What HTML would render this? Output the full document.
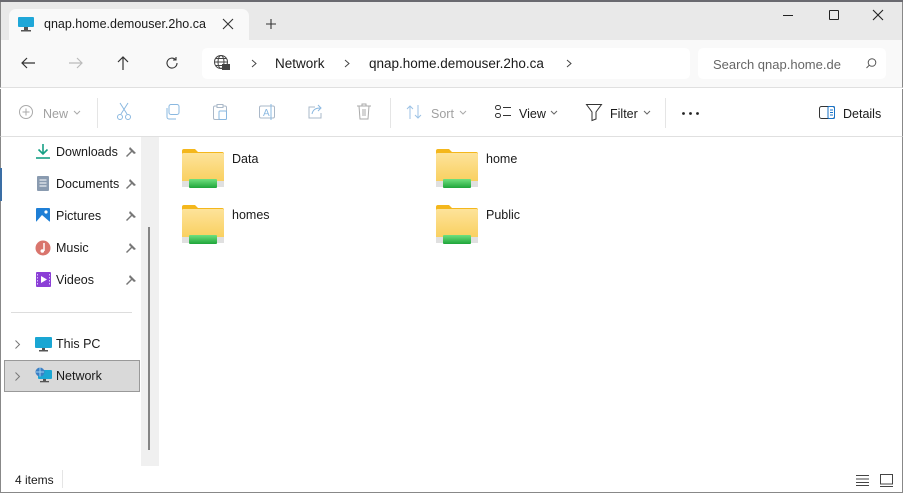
<!DOCTYPE html><html><head><style>
*{box-sizing:border-box;margin:0;padding:0}
body{width:903px;height:493px;overflow:hidden;font-family:"Segoe UI","Liberation Sans",sans-serif;font-size:12.5px;color:#1a1a1a;background:#fff;position:relative}
.a{position:absolute}
svg{position:absolute;overflow:visible}
.t{position:absolute;white-space:nowrap;margin-top:1px}
.g{color:#a0a0a0}
</style></head><body>
<div class="a" style="left:0;top:0;width:903px;height:2px;background:#6a6a70"></div>
<div class="a" style="left:0;top:2px;width:903px;height:38px;background:#e9e9e9;border-left:1px solid #888;border-right:1px solid #888"></div>
<div class="a" style="left:9px;top:9px;width:240px;height:32px;background:#f9f9f9;border-radius:7px 7px 0 0"></div>
<svg style="left:18px;top:16px" width="16" height="16"><rect x="0" y="1" width="16" height="10" rx="1" fill="#1fa7d8"/><rect x="6" y="11" width="4" height="3" fill="#555"/><rect x="3" y="14" width="10" height="1.5" fill="#555"/></svg>
<div class="t" style="left:44px;top:16px;font-size:12.5px">qnap.home.demouser.2ho.ca</div>
<svg style="left:223px;top:19px" width="10" height="10"><path d="M0 0L10 10M10 0L0 10" stroke="#333" stroke-width="1.1"/></svg>
<svg style="left:266px;top:19px" width="10" height="10"><path d="M5 0V10M0 5H10" stroke="#333" stroke-width="1.1"/></svg>
<svg style="left:783px;top:15px" width="10" height="1"><path d="M0 .5H10" stroke="#222"/></svg>
<div class="a" style="left:829px;top:10px;width:10px;height:10px;border:1.2px solid #222;border-radius:1px"></div>
<svg style="left:873px;top:10px" width="10" height="10"><path d="M0 0L10 10M10 0L0 10" stroke="#222" stroke-width="1.1"/></svg>
<div class="a" style="left:0;top:40px;width:903px;height:48px;background:#f9f9f9;border-left:1px solid #888;border-right:1px solid #888;border-bottom:1px solid #e0e0e0"></div>
<svg style="left:21px;top:57px" width="14" height="12"><path d="M14 6H1M6 1L1 6L6 11" stroke="#333" fill="none" stroke-width="1.2"/></svg>
<svg style="left:69px;top:57px" width="14" height="12"><path d="M0 6H13M8 1L13 6L8 11" stroke="#bbb" fill="none" stroke-width="1.2"/></svg>
<svg style="left:117px;top:56px" width="12" height="14"><path d="M6 14V1M1 6L6 1L11 6" stroke="#333" fill="none" stroke-width="1.2"/></svg>
<svg style="left:166px;top:57px" width="12" height="12"><path d="M11 6A5 5 0 1 1 9.5 2.5M10 0V3H7" stroke="#333" fill="none" stroke-width="1.1"/></svg>
<div class="a" style="left:202px;top:48px;width:488px;height:31px;background:#fff;border-radius:5px"></div>
<svg style="left:214px;top:55px" width="18" height="18"><circle cx="7" cy="7" r="6.5" fill="none" stroke="#444"/><ellipse cx="7" cy="7" rx="3" ry="6.5" fill="none" stroke="#444"/><path d="M.5 7H13.5M2 3.5H12M2 10.5H12" stroke="#444"/><rect x="8" y="9" width="8" height="6" fill="#444"/></svg>
<svg style="left:251px;top:59px" width="6" height="9"><path d="M1 1L5 4.5L1 8" stroke="#444" fill="none"/></svg>
<div class="t" style="left:275px;top:55px;font-size:13.5px">Network</div>
<svg style="left:344px;top:59px" width="6" height="9"><path d="M1 1L5 4.5L1 8" stroke="#444" fill="none"/></svg>
<div class="t" style="left:369px;top:55px;font-size:13.5px">qnap.home.demouser.2ho.ca</div>
<svg style="left:566px;top:59px" width="6" height="9"><path d="M1 1L5 4.5L1 8" stroke="#444" fill="none"/></svg>
<div class="a" style="left:698px;top:48px;width:188px;height:31px;background:#fff;border-radius:5px"></div>
<div class="t" style="left:713px;top:56px;color:#666;font-size:13px">Search qnap.home.de</div>
<svg style="left:866px;top:58px" width="11" height="11"><circle cx="6" cy="4.5" r="3.8" fill="none" stroke="#555"/><path d="M3.3 7.2L.5 10" stroke="#555"/></svg>
<div class="a" style="left:0;top:89px;width:903px;height:48px;background:#fff;border-left:1px solid #888;border-right:1px solid #888;border-bottom:1px solid #e0e0e0"></div>
<svg style="left:19px;top:105px" width="14" height="14"><circle cx="7" cy="7" r="6.5" fill="none" stroke="#aaa"/><path d="M7 3.5V10.5M3.5 7H10.5" stroke="#aaa"/></svg>
<div class="t g" style="left:43px;top:106px">New</div>
<svg style="left:74px;top:111px" width="6" height="4"><path d="M0 0L3 3L6 0" stroke="#aaa" fill="none"/></svg>
<div class="a" style="left:97px;top:98px;width:1px;height:30px;background:#e5e5e5"></div>
<svg style="left:116px;top:103px" width="16" height="18"><path d="M4 0L11 11M12 0L5 11" stroke="#8ab8e0" fill="none"/><circle cx="4" cy="14" r="2.5" fill="none" stroke="#8ab8e0"/><circle cx="12" cy="14" r="2.5" fill="none" stroke="#8ab8e0"/></svg>
<svg style="left:165px;top:104px" width="16" height="16"><rect x="4" y="0.5" width="10" height="10" rx="2" fill="none" stroke="#8ab8e0"/><path d="M2 4V13A2 2 0 0 0 4 15H11" fill="none" stroke="#8ab8e0"/></svg>
<svg style="left:213px;top:104px" width="14" height="16"><rect x="0.5" y="2" width="13" height="13.5" rx="1.5" fill="none" stroke="#aab8c8"/><rect x="4" y="0.5" width="6" height="3" fill="#fff" stroke="#aab8c8"/><rect x="6" y="7" width="7.5" height="8.5" rx="1" fill="#fff" stroke="#8ab8e0"/></svg>
<svg style="left:259px;top:104px" width="18" height="17"><rect x="0.5" y="2" width="15" height="12" rx="1.5" fill="none" stroke="#aab8c8"/><text x="4" y="12" font-size="10" fill="#8ab8e0" font-family="Liberation Sans">A</text><path d="M12 0V16" stroke="#8ab8e0"/></svg>
<svg style="left:307px;top:104px" width="17" height="15"><path d="M8 3H2V14H14V9" fill="none" stroke="#aab8c8"/><path d="M5 10C6 5 10 4 13 4M11 1L14 4L11 7" fill="none" stroke="#8ab8e0"/></svg>
<svg style="left:357px;top:103px" width="14" height="17"><path d="M0 3H14M5 3V1H9V3M2 3L3 16H11L12 3M6 6V13M8 6V13" fill="none" stroke="#aaa"/></svg>
<div class="a" style="left:390px;top:98px;width:1px;height:30px;background:#e5e5e5"></div>
<svg style="left:406px;top:105px" width="17" height="14"><path d="M4 14V1M1 4L4 1L7 4M12 0V13M9 10L12 13L15 10" fill="none" stroke="#9cc2e5"/></svg>
<div class="t g" style="left:431px;top:106px">Sort</div>
<svg style="left:460px;top:111px" width="6" height="4"><path d="M0 0L3 3L6 0" stroke="#aaa" fill="none"/></svg>
<svg style="left:495px;top:105px" width="17" height="14"><rect x=".5" y=".5" width="5" height="4" rx="2" fill="none" stroke="#333"/><rect x=".5" y="8.5" width="5" height="4" rx="2" fill="none" stroke="#333"/><path d="M8 2.5H16M8 10.5H16" stroke="#333"/></svg>
<div class="t" style="left:519px;top:106px">View</div>
<svg style="left:551px;top:111px" width="6" height="4"><path d="M0 0L3 3L6 0" stroke="#666" fill="none"/></svg>
<svg style="left:586px;top:104px" width="16" height="17"><path d="M.5 .5H15.5L10 8V15L6 16.5V8Z" fill="none" stroke="#333"/></svg>
<div class="t" style="left:610px;top:106px">Filter</div>
<svg style="left:644px;top:111px" width="6" height="4"><path d="M0 0L3 3L6 0" stroke="#666" fill="none"/></svg>
<div class="a" style="left:665px;top:98px;width:1px;height:30px;background:#e5e5e5"></div>
<svg style="left:682px;top:112px" width="18" height="3"><circle cx="1.5" cy="1.5" r="1.4" fill="#222"/><circle cx="8.5" cy="1.5" r="1.4" fill="#222"/><circle cx="15.5" cy="1.5" r="1.4" fill="#222"/></svg>
<svg style="left:819px;top:106px" width="16" height="13"><rect x=".5" y=".5" width="15" height="12" rx="2" fill="none" stroke="#333"/><rect x="9" y=".5" width="6.5" height="12" rx="1" fill="none" stroke="#1a73c7"/><path d="M11 4H14M11 6.5H14M11 9H14" stroke="#1a73c7"/></svg>
<div class="t" style="left:843px;top:106px">Details</div>
<div class="a" style="left:0;top:137px;width:903px;height:356px;border-left:1px solid #888;border-right:1px solid #888;border-bottom:1px solid #888"></div>
<div class="a" style="left:141px;top:137px;width:17px;height:329px;background:#f0f0f0"></div>
<div class="a" style="left:158px;top:137px;width:1px;height:329px;background:#f0f0f0"></div>
<div class="a" style="left:148px;top:227px;width:2px;height:223px;background:#858585"></div>
<div class="a" style="left:0;top:168px;width:2px;height:33px;background:#3a6ea5"></div>
<svg style="left:36px;top:144px" width="14" height="15"><path d="M7 0V10M2.5 5.5L7 10L11.5 5.5" fill="none" stroke="#16a085" stroke-width="1.6"/><path d="M0 14H14" stroke="#16a085" stroke-width="1.6"/></svg>
<div class="t" style="left:56px;top:144px">Downloads</div>
<svg style="left:37px;top:176px" width="12" height="15"><rect width="12" height="15" rx="1" fill="#8a9bb0"/><path d="M2.5 4H9.5M2.5 7H9.5M2.5 10H9.5" stroke="#fff"/></svg>
<div class="t" style="left:56px;top:176px">Documents</div>
<svg style="left:36px;top:208px" width="14" height="14"><rect width="14" height="14" rx="1" fill="#1e7fd6"/><path d="M0 14L6 7L14 14Z" fill="#fff"/><circle cx="10" cy="4" r="1.6" fill="#fff"/></svg>
<div class="t" style="left:56px;top:208px">Pictures</div>
<svg style="left:35px;top:240px" width="16" height="16"><circle cx="8" cy="8" r="7.5" fill="#d9756d"/><path d="M9 3V11" stroke="#fff" stroke-width="1.5"/><circle cx="7.3" cy="11" r="1.8" fill="#fff"/></svg>
<div class="t" style="left:56px;top:240px">Music</div>
<svg style="left:36px;top:272px" width="15" height="15"><rect width="15" height="15" rx="1" fill="#8b3fd6"/><path d="M5 4L11 7.5L5 11Z" fill="#fff"/><path d="M1.5 2V13M13.5 2V13" stroke="#d8c0ff" stroke-dasharray="1.5 1.5"/></svg>
<div class="t" style="left:56px;top:272px">Videos</div>
<svg style="left:126px;top:147px" width="10" height="10"><path d="M4 0L10 6L8 7L6 5L1 10L0 9L5 4L3 2Z" fill="#777"/></svg>
<svg style="left:126px;top:179px" width="10" height="10"><path d="M4 0L10 6L8 7L6 5L1 10L0 9L5 4L3 2Z" fill="#777"/></svg>
<svg style="left:126px;top:211px" width="10" height="10"><path d="M4 0L10 6L8 7L6 5L1 10L0 9L5 4L3 2Z" fill="#777"/></svg>
<svg style="left:126px;top:243px" width="10" height="10"><path d="M4 0L10 6L8 7L6 5L1 10L0 9L5 4L3 2Z" fill="#777"/></svg>
<svg style="left:126px;top:275px" width="10" height="10"><path d="M4 0L10 6L8 7L6 5L1 10L0 9L5 4L3 2Z" fill="#777"/></svg>
<div class="a" style="left:11px;top:312px;width:121px;height:1px;background:#ddd"></div>
<svg style="left:15px;top:340px" width="5" height="9"><path d="M.5 .5L4.5 4.5L.5 8.5" stroke="#777" fill="none"/></svg>
<svg style="left:35px;top:337px" width="17" height="15"><rect y="0" width="17" height="11" rx="1" fill="#1aa6d3"/><rect x="7" y="11" width="3" height="2" fill="#555"/><rect x="4" y="13" width="9" height="1.5" fill="#555"/></svg>
<div class="t" style="left:56px;top:336px">This PC</div>
<div class="a" style="left:4px;top:360px;width:136px;height:32px;background:#d9d9d9;border:1px solid #999"></div>
<svg style="left:15px;top:372px" width="5" height="9"><path d="M.5 .5L4.5 4.5L.5 8.5" stroke="#777" fill="none"/></svg>
<svg style="left:35px;top:367px" width="17" height="16"><rect x="3" y="3" width="14" height="9" rx="1" fill="#1aa6d3"/><circle cx="5" cy="5" r="4.5" fill="#3b7fc4"/><path d="M1 5H9M5 .5V9.5" stroke="#9fd2f2"/><rect x="8" y="12" width="3" height="2" fill="#555"/><rect x="5" y="14" width="9" height="1.3" fill="#555"/></svg>
<div class="t" style="left:56px;top:368px">Network</div>
<div class="t" style="left:15px;top:472px;font-size:12px">4 items</div>
<div class="a" style="left:62px;top:470px;width:1px;height:18px;background:#e5e5e5"></div>
<svg style="left:856px;top:475px" width="13" height="11"><path d="M0 .5H13M0 4H13M0 7.5H13M0 10.5H13" stroke="#444"/></svg>
<svg style="left:880px;top:474px" width="13" height="13"><rect x=".5" y=".5" width="12" height="9.5" fill="none" stroke="#444"/><path d="M0 12.5H13" stroke="#444"/></svg>
<svg width="0" height="0"><defs><linearGradient id="fg" x1="0" y1="0" x2="0" y2="1"><stop offset="0" stop-color="#fde39a"/><stop offset="1" stop-color="#f9cf5d"/></linearGradient><linearGradient id="gg" x1="0" y1="0" x2="0" y2="1"><stop offset="0" stop-color="#6fe07f"/><stop offset="1" stop-color="#1fa53a"/></linearGradient><g id="fold"><path d="M0 2A2 2 0 0 1 2 0H13L16 3H40A2 2 0 0 1 42 5V10H0Z" fill="#f4b71c"/><rect x="0" y="4" width="42" height="30" rx="1.5" fill="url(#fg)"/><rect x="0" y="32" width="42" height="6" fill="#e0e0e0"/><rect x="7" y="30" width="28" height="9" rx="1" fill="url(#gg)"/></g></defs></svg>
<svg style="left:182px;top:149px" width="42" height="40"><use href="#fold"/></svg>
<svg style="left:182px;top:205px" width="42" height="40"><use href="#fold"/></svg>
<svg style="left:436px;top:149px" width="42" height="40"><use href="#fold"/></svg>
<svg style="left:436px;top:205px" width="42" height="40"><use href="#fold"/></svg>
<div class="t" style="left:232px;top:151px">Data</div>
<div class="t" style="left:232px;top:207px">homes</div>
<div class="t" style="left:486px;top:151px">home</div>
<div class="t" style="left:486px;top:207px">Public</div>
</body></html>
